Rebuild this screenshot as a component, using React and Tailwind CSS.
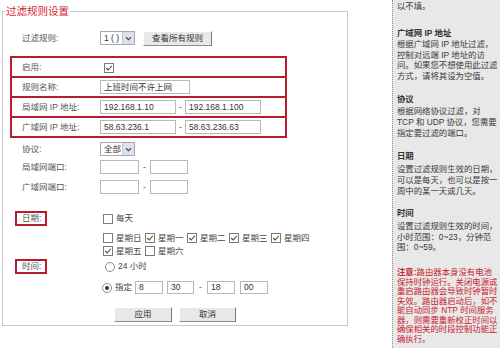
import React from 'react';

const font = "font-['Liberation_Sans','Noto_Sans_CJK_SC',sans-serif]";

const Check = ({ on }) => (
  <span className="inline-flex w-[10px] h-[10px] shrink-0 items-center justify-center border border-[#7b7b7b] bg-white">
    {on && (
      <svg viewBox="0 0 10 10" className="w-[8px] h-[8px]">
        <path d="M1.5 5 L4 7.5 L8.5 2.2" stroke="#2f5f2f" strokeWidth="1.4" fill="none" />
      </svg>
    )}
  </span>
);

const Radio = ({ on }) => (
  <span className="flex w-[10px] h-[10px] shrink-0 items-center justify-center rounded-full border border-[#8a8a8a] bg-white">
    {on && <span className="w-[4px] h-[4px] rounded-full bg-[#333]" />}
  </span>
);

const Input = ({ w, h = 'h-[14px]', value }) => (
  <div className={`${w} ${h} flex items-center border border-[#b9b9b9] bg-white pl-[3px] text-[8.5px] text-[#333] overflow-hidden whitespace-nowrap`}>
    {value}
  </div>
);

const Dash = ({ w }) => <span className={`${w} text-center text-[8.5px] text-[#555]`}>-</span>;

const Select = ({ label }) => (
  <div className="w-[35px] h-[14px] flex border border-[#a9a9a9] bg-white text-[8.5px] text-[#333]">
    <span className="flex-1 pl-[3px] flex items-center whitespace-nowrap">{label}</span>
    <span className="w-[12px] flex items-center justify-center bg-[#dde2ea] border-l border-[#c4cad4]">
      <svg viewBox="0 0 8 6" className="w-[7px] h-[5px]">
        <path d="M1 1.5 L4 4.5 L7 1.5" stroke="#445" strokeWidth="1.3" fill="none" />
      </svg>
    </span>
  </div>
);

const Btn = ({ w, children }) => (
  <div className={`${w} h-[15px] flex items-center justify-center bg-[#e8e8e8] border border-t-white border-l-white border-r-[#7a7a7a] border-b-[#8a8a8a] text-[8.5px] text-[#333]`}>
    {children}
  </div>
);

const Label = ({ children }) => <span className="w-[78px] shrink-0 text-[8.5px] text-[#555]">{children}</span>;

// rows inside the red frame: border-box, so the 2px divider sits inside the 20px
const BoxRow = ({ label, children, last }) => (
  <div className={`flex items-center pl-[10px] ${last ? 'h-[18px]' : 'h-[20px] border-b-2 border-[#b41f2f]'}`}>
    <Label>{label}</Label>
    {children}
  </div>
);

const Day = ({ on, name }) => (
  <div className="w-[42px] flex items-center gap-[3px] text-[8.5px] text-[#444]">
    <Check on={on} />
    <span className="whitespace-nowrap">{name}</span>
  </div>
);

const help = [
  { mt: 'mt-[1px]', lines: ['以不填。'] },
  { mt: 'mt-[15px]', title: '广域网 IP 地址', mb: 'mb-0', lines: ['根据广域网 IP 地址过滤，', '控制对远端 IP 地址的访', '问。如果您不想使用此过滤', '方式，请将其设为空值。'] },
  { mt: 'mt-[11px]', title: '协议', mb: 'mb-[1px]', lines: ['根据网络协议过滤，对', 'TCP 和 UDP 协议，您需要', '指定要过滤的端口。'] },
  { mt: 'mt-[12px]', title: '日期', mb: 'mb-[2px]', lines: ['设置过滤规则生效的日期，', '可以是每天，也可以是按一', '周中的某一天或几天。'] },
  { mt: 'mt-[10px]', title: '时间', mb: 'mb-[2px]', lines: ['设置过滤规则生效的时间，', '小时范围：0~23，分钟范', '围：0~59。'] },
];

const note = ['路由器本身没有电池', '保持时钟运行。关闭电源或', '重启路由器会导致时钟暂时', '失效。路由器启动后，如不', '能自动同步 NTP 时间服务', '器，则需要重新校正时间以', '确保相关的时段控制功能正', '确执行。'];

export default function App() {
  return (
    <div className={`w-[500px] h-[348px] flex bg-white overflow-hidden ${font}`}>
      {/* form side */}
      <div className="w-[392px] shrink-0">
        <fieldset className="ml-[2px] mt-[5px] w-[346px] h-[321px] border border-[#c9c9c9]">
          <legend className="ml-[2px] px-[1px] text-[10.5px] leading-[12px] text-[#d3262c]">过滤规则设置</legend>

          <div className="mt-[14px] h-[14px] flex items-center pl-[19px]">
            <Label>过滤规则:</Label>
            <Select label="1 ( )" />
            <div className="ml-[8px]">
              <Btn w="w-[69px]">查看所有规则</Btn>
            </div>
          </div>

          <div className="mt-[11px] ml-[7px] w-[277px] border-2 border-[#b41f2f]">
            <BoxRow label="启用:">
              <span className="ml-[4px]"><Check on /></span>
            </BoxRow>
            <BoxRow label="规则名称:">
              <Input w="w-[90px]" value="上班时间不许上网" />
            </BoxRow>
            <BoxRow label="局域网 IP 地址:">
              <Input w="w-[76px]" value="192.168.1.10" />
              <Dash w="w-[9px]" />
              <Input w="w-[76px]" value="192.168.1.100" />
            </BoxRow>
            <BoxRow label="广域网 IP 地址:" last>
              <Input w="w-[76px]" value="58.63.236.1" />
              <Dash w="w-[9px]" />
              <Input w="w-[76px]" value="58.63.236.63" />
            </BoxRow>
          </div>

          <div className="mt-[4px] h-[14px] flex items-center pl-[19px]">
            <Label>协议:</Label>
            <Select label="全部" />
          </div>

          <div className="mt-[4px] h-[14px] flex items-center pl-[19px]">
            <Label>局域网端口:</Label>
            <Input w="w-[39px]" />
            <Dash w="w-[11px]" />
            <Input w="w-[38px]" />
          </div>

          <div className="mt-[6px] h-[14px] flex items-center pl-[19px]">
            <Label>广域网端口:</Label>
            <Input w="w-[39px]" />
            <Dash w="w-[11px]" />
            <Input w="w-[38px]" />
          </div>

          <div className="mt-[17px] h-[15px] flex items-center pl-[12px]">
            <div className="w-[85px] shrink-0">
              <div className="w-[32px] h-[15px] flex items-center border-2 border-[#b41f2f] pl-[5px] text-[8.5px] text-[#555]">日期:</div>
            </div>
            <div className="ml-[3px] flex items-center gap-[3px] text-[8.5px] text-[#444]">
              <Check />
              <span>每天</span>
            </div>
          </div>

          <div className="mt-[6px] h-[12px] flex items-center pl-[100px]">
            <Day name="星期日" />
            <Day on name="星期一" />
            <Day on name="星期二" />
            <Day on name="星期三" />
            <Day on name="星期四" />
          </div>
          <div className="mt-[1px] h-[12px] flex items-center pl-[100px]">
            <Day on name="星期五" />
            <Day name="星期六" />
          </div>

          <div className="mt-[2px] h-[15px] flex items-center pl-[12px]">
            <div className="w-[87px] shrink-0">
              <div className="w-[32px] h-[15px] flex items-center border-2 border-[#b41f2f] pl-[5px] text-[8.5px] text-[#555]">时间:</div>
            </div>
            <div className="ml-[3px] flex items-center gap-[3px] text-[8.5px] text-[#444]">
              <Radio />
              <span>24 小时</span>
            </div>
          </div>

          <div className="mt-[7px] h-[13px] flex items-center pl-[99px]">
            <Radio on />
            <span className="ml-[3px] w-[20px] text-[8.5px] text-[#444]">指定</span>
            <Input w="w-[28px]" h="h-[13px]" value="8" />
            <span className="w-[4px]" />
            <Input w="w-[27px]" h="h-[13px]" value="30" />
            <Dash w="w-[13px]" />
            <Input w="w-[28px]" h="h-[13px]" value="18" />
            <span className="w-[5px]" />
            <Input w="w-[28px]" h="h-[13px]" value="00" />
          </div>

          <div className="mt-[13px] flex gap-[7px] pl-[111px]">
            <Btn w="w-[58px]">应用</Btn>
            <Btn w="w-[57px]">取消</Btn>
          </div>
        </fieldset>
      </div>

      {/* help side */}
      <div className="w-[108px] h-[348px] shrink-0 bg-[#e8e8e8] border-l border-dotted border-[#8c8c8c] pl-[4px] text-[8.4px] text-[#3a3a3a] whitespace-nowrap overflow-hidden">
        {help.map((b, i) => (
          <div key={i} className={b.mt}>
            {b.title && <div className={`leading-[12px] font-bold text-[#333] ${b.mb}`}>{b.title}</div>}
            {b.lines.map((l) => (
              <div key={l} className="leading-[10.8px]">{l}</div>
            ))}
          </div>
        ))}
        <div className="mt-[15px] text-[#c8202e]">
          {note.map((l, i) => (
            <div key={l} className="leading-[9.5px]">
              {i === 0 && <span className="font-bold">注意:</span>}
              {l}
            </div>
          ))}
        </div>
      </div>
    </div>
  );
}
